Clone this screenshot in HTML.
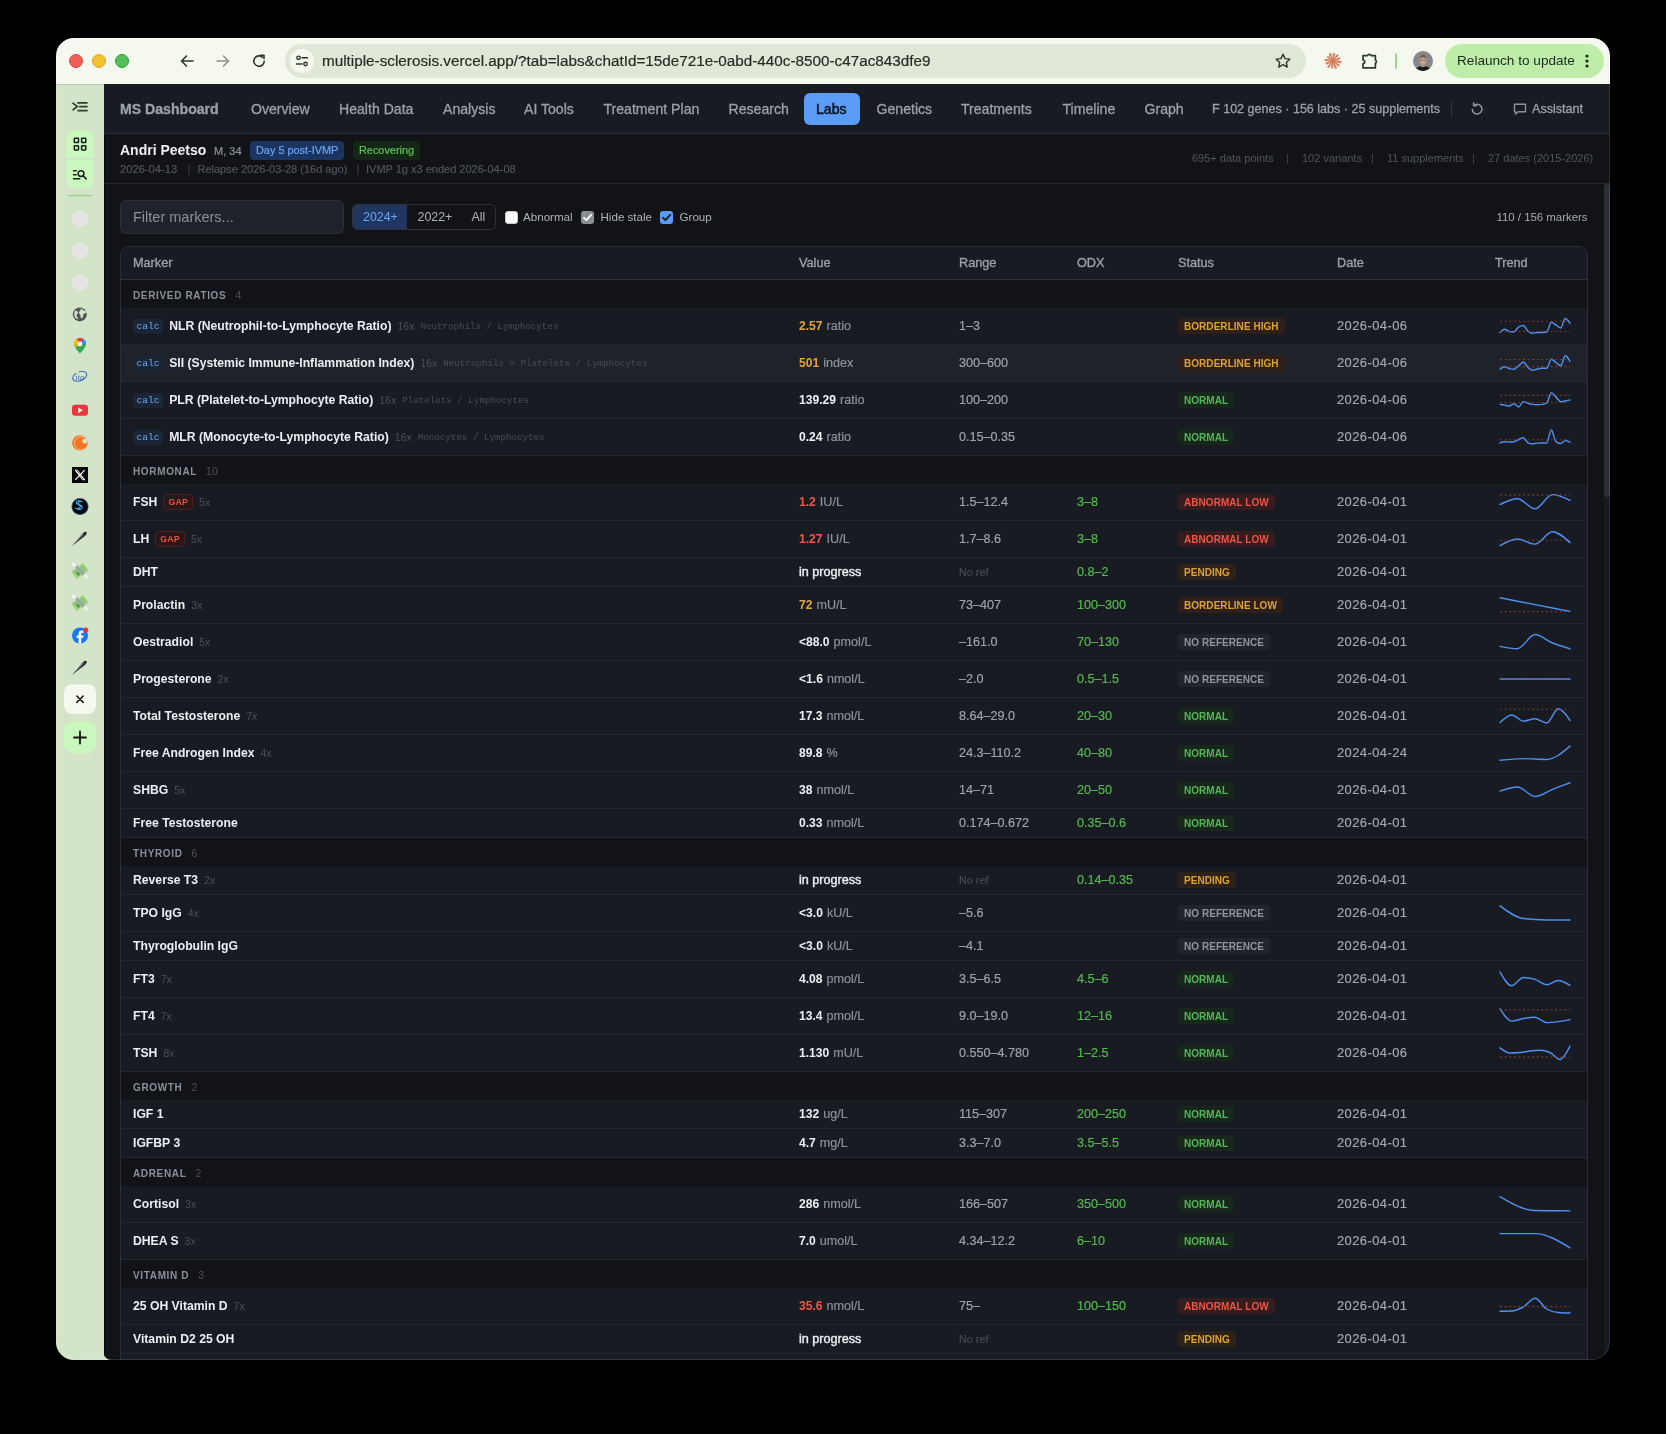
<!DOCTYPE html>
<html><head><meta charset="utf-8"><title>MS Dashboard - Labs</title>
<style>*{box-sizing:border-box;margin:0;padding:0}
html,body{width:1666px;height:1434px;overflow:hidden;background:#000;font-family:"Liberation Sans",sans-serif}
.win{position:absolute;left:56px;top:38px;width:1554px;height:1322px;border-radius:18px;overflow:hidden;background:#121317;will-change:transform}
.win::after{content:'';position:absolute;left:0;top:0;width:1554px;height:1322px;box-sizing:border-box;border:1px solid rgba(255,255,255,.12);border-radius:18px;pointer-events:none;z-index:50}
.gcorner{position:absolute;left:48px;top:1300px;width:22px;height:22px;background:#d3e4c9}
.abs{position:absolute;white-space:nowrap}
.chrome{position:absolute;left:0;top:0;width:1554px;height:46px;background:#f5f8ef}
.tl{position:absolute;top:16px;width:14px;height:14px;border-radius:50%}
.url{position:absolute;left:229px;top:6px;width:1021px;height:34px;border-radius:17px;background:#dfe7d6}
.urltxt{position:absolute;left:266px;top:14px;font-size:15.27px;line-height:18px;color:#262b24;letter-spacing:0}
.site{position:absolute;left:234px;top:11px;width:24px;height:24px;border-radius:50%;background:#f5f8ef}
.relaunch{position:absolute;left:1389px;top:6px;width:159px;height:34px;border-radius:17px;background:#bdeda9}
.side{position:absolute;left:0;top:46px;width:48px;height:1276px;background:#d3e4c9;box-shadow:inset 0 1px 0 #bfcbb6}
.main{position:absolute;left:48px;top:46px;width:1506px;height:1276px;background:#121317;border-bottom-left-radius:7px;overflow:hidden}
.mline{position:absolute;left:0;top:0;width:1px;height:1276px;background:#07080a}
.nav{position:absolute;left:0;top:0;width:1506px;height:50px;background:#181b22;border-bottom:1px solid #2a2e36}
.nv{position:absolute;top:0;font-size:14.1px;line-height:50px;color:#9ba1ab;white-space:nowrap;-webkit-text-stroke:.3px currentColor}
.hdr{position:absolute;left:0;top:50px;width:1506px;height:50px;border-bottom:1px solid #23262d}
.badge{position:absolute;top:7px;height:19px;border-radius:4px;font-size:10.9px;line-height:19px;padding:0 6px;white-space:nowrap;-webkit-text-stroke:.2px currentColor}
.tbl{position:absolute;left:16px;top:162px;width:1468px;border:1px solid #2a2e36;border-radius:9px;overflow:hidden;background:#181b22}
.th{position:absolute;left:0;top:0;width:1466px;height:33px;border-bottom:1px solid #2c3038;background:#181b22}
.th span{position:absolute;top:0;line-height:32px;font-size:12.7px;color:#9aa0a9;-webkit-text-stroke:.35px currentColor}
.grp{position:absolute;left:0;width:1466px;background:#121317}
.gn{position:absolute;left:12px;top:.5px;line-height:28px;font-size:10px;font-weight:700;letter-spacing:.65px;color:#8a9099}
.gc{font-size:10.5px;font-weight:400;letter-spacing:0;color:#4d525a;margin-left:9px}
.row{position:absolute;left:0;width:1466px;background:#181b22;border-bottom:1px solid #24272e;box-sizing:content-box}
.row.hov{background:#1f2229}
.c{position:absolute;top:0;height:100%;display:flex;align-items:center;white-space:nowrap}
.cm{left:12px}.cv{left:678px}.cr{left:838px}.co{left:956px}.cs{left:1057px}.cd{left:1216px}.ct{left:1369px}
.calc{display:inline-block;height:15px;line-height:16.5px;padding:0 3.6px;border-radius:3px;background:#1a2535;color:#6fa9f5;font-family:"Liberation Mono",monospace;font-size:9.6px;margin-right:6px}
.mn{font-size:12.2px;font-weight:700;color:#eceef1}
.gap{display:inline-block;height:16px;line-height:15.5px;padding:0 4px;border-radius:3px;background:#2a1719;border:1px solid #4a1f20;color:#e6533f;font-size:8.8px;font-weight:700;margin-left:6px;letter-spacing:.2px}
.cnt{font-size:10.5px;color:#4b5058;margin-left:6px}
.mono{font-family:"Liberation Mono",monospace;font-size:9.2px;color:#474c55;margin-left:6px}
.v{font-size:12.1px;font-weight:700}
.v.amber{color:#e1a43c}.v.red{color:#ef5848}.v.w{color:#eceef1}
.u{font-size:12.6px;color:#8c929b;margin-left:4px}
.cr{font-size:12.6px;color:#9ea3ab}
.cr.dim{font-size:10.8px;color:#474b53}
.co{font-size:12.6px;color:#55b94f}
.cd{font-size:12.9px;color:#a2a7af;letter-spacing:.45px;top:-1px}
.pill{display:inline-block;height:16px;line-height:17.4px;padding:0 6px;border-radius:4px;font-size:10px;font-weight:700;letter-spacing:.05px}
.pill.bh{background:#2f1f1b;color:#dca330}
.pill.nm{background:#17271c;color:#52b755}
.pill.al{background:#351c1e;color:#ec5644}
.pill.pd{background:#2d2219;color:#dca330}
.pill.nr{background:#21242b;color:#8f959d}
.spk{display:block}
.sl{fill:none;stroke:#4f8ff0;stroke-width:1.45;stroke-linecap:round;stroke-linejoin:round}
.rl{stroke:#9a4434;stroke-width:1.1;stroke-dasharray:2 2.6;opacity:.75}
.sb{position:absolute;left:1500px;top:100px;width:5px;height:1176px;background:#171a21}
.thumb{position:absolute;left:0;top:0;width:5.5px;height:313px;border-radius:3px;background:#2c2f36}

.sub{top:28px;font-size:11.2px;line-height:14px;color:#50555d}.sub.bar{color:#3a3e45}

.v.ip{font-size:12.6px;font-weight:400;-webkit-text-stroke:.4px currentColor}
.cd,.cr,.u,.co,.sub,.urltxt{-webkit-text-stroke:.18px currentColor}
</style></head>
<body>
<div class="win">
  <div class="chrome">
    <div class="tl" style="left:13px;background:#ee5f57;border:1px solid #e0443a"></div>
    <div class="tl" style="left:36px;background:#f3c02f;border:1px solid #dea622"></div>
    <div class="tl" style="left:59px;background:#55bd59;border:1px solid #2aa62f"></div>
    <!-- back -->
    <svg class="abs" style="left:123px;top:15px" width="16" height="16" viewBox="0 0 16 16"><path d="M14 8H2.5M7.5 3L2.5 8l5 5" fill="none" stroke="#2c3528" stroke-width="1.6" stroke-linecap="round" stroke-linejoin="round"/></svg>
    <svg class="abs" style="left:159px;top:15px" width="16" height="16" viewBox="0 0 16 16"><path d="M2 8h11.5M8.5 3l5 5-5 5" fill="none" stroke="#8c9488" stroke-width="1.6" stroke-linecap="round" stroke-linejoin="round"/></svg>
    <svg class="abs" style="left:195px;top:15px" width="16" height="16" viewBox="0 0 16 16"><path d="M13.2 8.2A5.2 5.2 0 1 1 11.6 4.3" fill="none" stroke="#2c3528" stroke-width="1.6" stroke-linecap="round"/><path d="M9.6 2.2h3.4v3.4" fill="none" stroke="#2c3528" stroke-width="1.6" stroke-linecap="round" stroke-linejoin="round"/></svg>
    <div class="url"></div>
    <div class="site"></div>
    <svg class="abs" style="left:238px;top:15px" width="16" height="16" viewBox="0 0 16 16"><circle cx="4.5" cy="4.8" r="1.7" fill="none" stroke="#2c3528" stroke-width="1.4"/><path d="M8 4.8h5.5M2.5 11h5.5" stroke="#2c3528" stroke-width="1.4" stroke-linecap="round"/><circle cx="11.5" cy="11" r="1.7" fill="none" stroke="#2c3528" stroke-width="1.4"/></svg>
    <div class="urltxt">multiple-sclerosis.vercel.app/?tab=labs&amp;chatId=15de721e-0abd-440c-8500-c47ac843dfe9</div>
    <svg class="abs" style="left:1218px;top:14px" width="18" height="18" viewBox="0 0 18 18"><path d="M9 2.2l2.05 4.4 4.75.55-3.5 3.25.95 4.7L9 12.7l-4.25 2.4.95-4.7L2.2 7.15l4.75-.55z" fill="none" stroke="#2c3528" stroke-width="1.4" stroke-linejoin="round"/></svg>
    <svg class="abs" style="left:1268px;top:14px" width="18" height="18" viewBox="0 0 18 18"><path d="M9.94,9.49 L17.00,10.98 L17.24,9.30 L10.04,8.79Z M9.57,9.89 L14.47,14.35 L15.51,13.01 L10.00,9.34Z M9.05,10.06 L11.21,16.74 L12.78,16.10 L9.70,9.80Z M8.51,9.94 L7.16,16.01 L8.84,16.25 L9.21,10.04Z M8.11,9.57 L3.22,15.02 L4.56,16.06 L8.66,10.00Z M7.94,9.05 L1.73,11.02 L2.36,12.60 L8.20,9.70Z M8.06,8.51 L1.10,7.03 L0.86,8.71 L7.96,9.21Z M8.43,8.11 L4.01,4.02 L2.96,5.36 L8.00,8.66Z M8.95,7.94 L6.72,1.08 L5.14,1.72 L8.30,8.20Z M9.49,8.06 L10.91,1.49 L9.23,1.26 L8.79,7.96Z M9.89,8.43 L14.53,3.30 L13.19,2.25 L9.34,8.00Z M10.06,8.95 L16.09,7.05 L15.45,5.48 L9.80,8.30Z" fill="#d97757" stroke="#d97757" stroke-width=".5" stroke-linejoin="round"/><circle cx="9" cy="9" r="2.2" fill="#d97757"/></svg>
    <svg class="abs" style="left:1305px;top:14px" width="18" height="18" viewBox="0 0 18 18"><path d="M2 3.6h4.6a1.9 1.9 0 0 1 3.6 0H14.4v4.3a1.9 1.9 0 0 1 0 3.4v4.6H2v-4.4a1.7 1.7 0 0 0 0-3.5z" fill="none" stroke="#2c3a2a" stroke-width="1.7" stroke-linejoin="round"/></svg>
    <div class="abs" style="left:1339px;top:15px;width:2px;height:16px;background:#9fd98d;border-radius:1px"></div>
    <svg class="abs" style="left:1357px;top:13px" width="20" height="20" viewBox="0 0 20 20"><defs><clipPath id="av"><circle cx="10" cy="10" r="10"/></clipPath></defs><g clip-path="url(#av)"><rect width="20" height="20" fill="#85888c"/><ellipse cx="10" cy="21.5" rx="9.5" ry="6.5" fill="#16181d"/><path d="M8.3 13h3.4v3H8.3z" fill="#b8927a"/><ellipse cx="10" cy="9.2" rx="3.3" ry="4.4" fill="#c9a48a"/><path d="M6.6 8c0-2.8 1.5-4.2 3.4-4.2s3.4 1.4 3.4 4.2c-.8-1.2-2-1.6-3.4-1.6s-2.6.4-3.4 1.6z" fill="#7a5a40"/><path d="M7.3 9.2h2.3M10.4 9.2h2.3" stroke="#3a3a3a" stroke-width=".6"/></g></svg>
    <div class="relaunch"></div>
    <div class="abs" style="left:1401px;top:14px;font-size:13.6px;line-height:18px;color:#1c2a18">Relaunch to update</div>
    <svg class="abs" style="left:1527px;top:14px" width="8" height="18" viewBox="0 0 8 18"><circle cx="4" cy="4" r="1.6" fill="#1c2a18"/><circle cx="4" cy="9" r="1.6" fill="#1c2a18"/><circle cx="4" cy="14" r="1.6" fill="#1c2a18"/></svg>
  </div>
  <div class="side">
    <svg width="48" height="1276" viewBox="56 84 48 1276" style="position:absolute;left:0;top:0">
<g fill="none" stroke="#2f3d2a" stroke-width="1.7" stroke-linecap="round" stroke-linejoin="round">
<path d="M73 103.2l4.2 3.3-4.2 3.3"/><path d="M78 102.8h9M79.5 106.6h7.5M78 110.6h9"/>
</g>
<path d="M74 130h12a8 8 0 0 1 8 8v20h-28v-20a8 8 0 0 1 8-8z" fill="#c9f7bd"/>
<path d="M66 160h28v20a8 8 0 0 1-8 8h-12a8 8 0 0 1-8-8z" fill="#c9f7bd"/>
<g fill="none" stroke="#17201a" stroke-width="1.5">
<rect x="74.3" y="138.3" width="4.2" height="4.2" rx=".6"/><rect x="81.6" y="138.3" width="4.2" height="4.2" rx=".6"/>
<rect x="74.3" y="145.7" width="4.2" height="4.2" rx=".6"/><rect x="81.6" y="145.7" width="4.2" height="4.2" rx=".6"/>
</g>
<g fill="none" stroke="#17201a" stroke-width="1.5" stroke-linecap="round">
<path d="M73.5 170.7h2.7M73.5 174.8h2.7M73.5 178.7h6.2"/><circle cx="81" cy="173.6" r="2.9"/><path d="M83.2 175.9l3 3"/>
</g>
<path d="M68 195.6h24" stroke="#93cf84" stroke-width="1.3"/>
<g fill="#e3e3e3" stroke="#f6f6f6" stroke-width=".8" stroke-dasharray="1.5 1.5">
<circle cx="79.8" cy="218.8" r="7.6"/><circle cx="79.8" cy="250.6" r="7.6"/><circle cx="79.8" cy="282.4" r="7.6"/>
</g>
<circle cx="79.8" cy="314.4" r="7" fill="#53575c"/>
<path d="M75 310.5c1.8.2 3 1 3 2.3s-1.5 1.2-1.5 2.8 1.8 1.4 1.2 3.6c-1.4-.3-3.2-1.8-3.5-4.2.2-1.8.4-3.4.8-4.5zM81 308.2c1.5.8 1.5 2 3 2.4.8.2 2.3.6 2.6 2-.8 1.2-2 .4-3 1.5-.9 1-.1 2.8-1.4 3.8-1 .5-2-.5-1.7-2 .4-1.5-1.8-1.5-1.4-3.6.3-1.4 1.7-1.4 1.9-4.1z" fill="#d3e4c9"/>
<g>
<path d="M80 353.5c-3-3.8-6-6.8-6-9.6a6 6 0 0 1 12 0c0 2.8-3 5.8-6 9.6z" fill="#34a853"/>
<path d="M74 343.9a6 6 0 0 1 3-5.2l3 5.2z" fill="#fbbc04"/>
<path d="M77 338.7a6 6 0 0 1 6 0l-3 5.2z" fill="#ea4335"/>
<path d="M83 338.7a6 6 0 0 1 3 5.2h-6z" fill="#4285f4"/>
<path d="M74 343.9h6l-4.3 4.2c-1-1.4-1.7-2.8-1.7-4.2z" fill="#fbbc04" opacity=".8"/>
<circle cx="80" cy="343.9" r="2.3" fill="#fff"/>
</g>
<g fill="none" stroke="#3b6fc0" stroke-width="1.1">
<path d="M76 373.5c-3 1.5-4 4.6-2.6 6.4 1.8 2.2 7.5 1.8 11.2-1.4 2.6-2.3 2.8-5.4.6-6.6-1.6-.9-4-.8-6.3 0"/>
</g>
<text x="75.3" y="379.6" font-family="Liberation Serif" font-style="italic" font-size="8.5" fill="#3b6fc0">ita</text>
<rect x="72" y="404.8" width="16" height="11" rx="3" fill="#e8363a"/>
<path d="M78.2 407.5v5.6l4.6-2.8z" fill="#fff"/>
<circle cx="79.9" cy="442.9" r="7.7" fill="#f47521"/>
<path d="M86.9 446.2A6.6 6.6 0 1 1 86.6 439.6" fill="none" stroke="#f9c9a8" stroke-width=".9"/>
<circle cx="81.2" cy="443.6" r="5.9" fill="#f47521"/>
<circle cx="84.8" cy="441.2" r="2.4" fill="#d3e4c9"/>
<rect x="72" y="467" width="16" height="16" fill="#050505"/>
<path d="M75.3 470.2l9.3 9.6M84.6 470.2l-9.3 9.6" stroke="#fff" stroke-width="1.2"/>
<path d="M75.3 470.2h2.3l7 9.6h-2.3z" fill="none" stroke="#fff" stroke-width=".8"/>
<circle cx="80" cy="506.5" r="8.3" fill="#03070b"/>
<circle cx="80" cy="506.5" r="8.1" fill="none" stroke="#3c6a86" stroke-width=".6"/>
<path d="M82.5 501.8c-2.5-.8-5 .3-4.2 2s4.5 1.3 4 3.6-3.7 2.5-5.2 1.5M80.5 501c-2.5-.8-5 .3-4.2 2s4.5 1.3 4 3.6-3.7 2.5-5.2 1.5" fill="none" stroke="#3bb6f5" stroke-width="1.1"/>
<g transform="translate(0 0)"><path d="M72.2 545.8L82.6 533.6C84.2 531.8 85.6 531.3 86.4 532.1 87.2 532.9 86.7 534.3 84.9 535.9z" fill="#25282b"/><path d="M75.5 541.8L83.4 534.2" stroke="#dfe3e6" stroke-width=".7" stroke-linecap="round"/></g>
<g transform="translate(80 571) rotate(-35)"><rect x="-7.5" y="-4.8" width="15" height="9.6" rx=".5" fill="#a3d48c"/><rect x="-5.5" y="-3.2" width="11" height="6.4" fill="#8fc776"/><text x="-4.6" y="2.8" font-size="5.5" font-weight="700" font-family="Liberation Sans" fill="#4c7c3a">$</text></g>
<path d="M75 565.5L85 575.5" stroke="#9aa3ad" stroke-width="2.6"/>
<ellipse cx="74" cy="564.8" rx="2.8" ry="1.7" transform="rotate(40 74 564.8)" fill="#eef0f3"/>
<ellipse cx="85.8" cy="576.4" rx="2.8" ry="1.7" transform="rotate(40 85.8 576.4)" fill="#eef0f3"/>
<g transform="translate(80 603) rotate(-35)"><rect x="-7.5" y="-4.8" width="15" height="9.6" rx=".5" fill="#a3d48c"/><rect x="-5.5" y="-3.2" width="11" height="6.4" fill="#8fc776"/><text x="-4.6" y="2.8" font-size="5.5" font-weight="700" font-family="Liberation Sans" fill="#4c7c3a">$</text></g>
<path d="M75 597.5L85 607.5" stroke="#9aa3ad" stroke-width="2.6"/>
<ellipse cx="74" cy="596.8" rx="2.8" ry="1.7" transform="rotate(40 74 596.8)" fill="#eef0f3"/>
<ellipse cx="85.8" cy="608.4" rx="2.8" ry="1.7" transform="rotate(40 85.8 608.4)" fill="#eef0f3"/>
<circle cx="80" cy="635.5" r="8" fill="#1877f2"/>
<path d="M81.2 643.5v-5.8h2l.3-2.3h-2.3v-1.5c0-.7.2-1.1 1.1-1.1h1.3v-2.1c-.3 0-1-.1-1.9-.1-1.9 0-3.1 1.1-3.1 3.2v1.6h-2v2.3h2v5.8z" fill="#fff"/>
<circle cx="85.7" cy="630.1" r="2.6" fill="#e53935"/>
<g transform="translate(0 129)"><path d="M72.2 545.8L82.6 533.6C84.2 531.8 85.6 531.3 86.4 532.1 87.2 532.9 86.7 534.3 84.9 535.9z" fill="#25282b"/><path d="M75.5 541.8L83.4 534.2" stroke="#dfe3e6" stroke-width=".7" stroke-linecap="round"/></g>
<rect x="64" y="684.5" width="32" height="29.5" rx="8" fill="#f4f8ed"/>
<path d="M76.8 696l6.4 6.4M83.2 696l-6.4 6.4" stroke="#1b1f1a" stroke-width="1.6" stroke-linecap="round"/>
<rect x="64" y="721.7" width="32" height="31.5" rx="8" fill="#c9f7bd"/>
<path d="M80 731.5v12M74 737.5h12" stroke="#121712" stroke-width="1.8" stroke-linecap="round"/>
</svg>

  </div>
  <div class="gcorner"></div>
  <div class="main"><div class="mline"></div>
    <div class="nav">
      <div class="nv" style="left:16px;font-weight:700;color:#9ba1ab">MS Dashboard</div>
      <div class="nv" style="left:147px">Overview</div>
      <div class="nv" style="left:235px">Health Data</div>
      <div class="nv" style="left:339px">Analysis</div>
      <div class="nv" style="left:420px">AI Tools</div>
      <div class="nv" style="left:499.5px">Treatment Plan</div>
      <div class="nv" style="left:624.5px">Research</div>
      <div class="abs" style="left:699.5px;top:9px;width:56.5px;height:32px;border-radius:6px;background:#5b9cf6"></div>
      <div class="nv" style="left:712px;color:#0b1220;-webkit-text-stroke:.5px #0b1220">Labs</div>
      <div class="nv" style="left:772.5px">Genetics</div>
      <div class="nv" style="left:857px">Treatments</div>
      <div class="nv" style="left:958.5px">Timeline</div>
      <div class="nv" style="left:1040.5px">Graph</div>
      <div class="nv" style="left:1108px;font-size:12.55px">F 102 genes · 156 labs · 25 supplements</div>
      <div class="abs" style="left:1347px;top:17px;width:1px;height:16px;background:#33373f"></div>
      <svg class="abs" style="left:1365px;top:17px" width="16" height="16" viewBox="0 0 16 16"><path d="M3.2 8.3A4.9 4.9 0 1 0 4.7 4.5" fill="none" stroke="#8d939c" stroke-width="1.5" stroke-linecap="round"/><path d="M4.6 1.8v2.9h2.9" fill="none" stroke="#8d939c" stroke-width="1.5" stroke-linecap="round" stroke-linejoin="round"/></svg>
      <svg class="abs" style="left:1408px;top:17px" width="16" height="16" viewBox="0 0 16 16"><path d="M2.5 3.2h11v7.6H6.2L3.5 13v-2.2h-1z" fill="none" stroke="#8d939c" stroke-width="1.4" stroke-linejoin="round"/></svg>
      <div class="nv" style="left:1428px;font-size:12.6px">Assistant</div>
    </div>
    <div class="hdr">
      <div class="abs" style="left:16px;top:7px;font-size:14px;font-weight:700;line-height:18px;color:#eef0f2">Andri Peetso</div>
      <div class="abs" style="left:110px;top:8px;font-size:11px;line-height:18px;color:#8c919a;-webkit-text-stroke:.2px currentColor">M, 34</div>
      <div class="badge" style="left:146px;background:#1c3560;color:#6aa5f4">Day 5 post-IVMP</div>
      <div class="badge" style="left:249px;background:#152616;color:#5cc35a">Recovering</div>
      <div class="abs sub" style="left:16px">2026-04-13</div><div class="abs sub bar" style="left:83.5px">|</div><div class="abs sub" style="left:93.5px;font-size:11px">Relapse 2026-03-28 (16d ago)</div><div class="abs sub bar" style="left:252.5px">|</div><div class="abs sub" style="left:262px;font-size:11px">IVMP 1g x3 ended 2026-04-08</div>
      <div class="abs" style="left:1088px;top:17px;font-size:11px;line-height:14px;color:#50555d">695+ data points</div>
      <div class="abs" style="left:1182px;top:17px;font-size:11px;line-height:14px;color:#3d4148">|</div>
      <div class="abs" style="left:1198px;top:17px;font-size:11px;line-height:14px;color:#50555d">102 variants</div>
      <div class="abs" style="left:1267px;top:17px;font-size:11px;line-height:14px;color:#3d4148">|</div>
      <div class="abs" style="left:1283px;top:17px;font-size:11px;line-height:14px;color:#50555d">11 supplements</div>
      <div class="abs" style="left:1368px;top:17px;font-size:11px;line-height:14px;color:#3d4148">|</div>
      <div class="abs" style="left:1384px;top:17px;font-size:11px;line-height:14px;color:#50555d">27 dates (2015-2026)</div>
    </div>
    <!-- filter row -->
    <div class="abs" style="left:16px;top:116px;width:224px;height:34px;border-radius:6px;background:#1f2229;border:1px solid #2c3038"></div>
    <div class="abs" style="left:29px;top:124px;font-size:14.5px;line-height:18px;color:#8a9099">Filter markers...</div>
    <div class="abs" style="left:248px;top:120px;width:144px;height:26px;border-radius:5px;border:1px solid #2c3038;overflow:hidden">
      <div class="abs" style="left:0;top:0;width:54px;height:24px;background:#1e3660"></div>
    </div>
    <div class="abs" style="left:259px;top:125px;font-size:12.4px;line-height:16px;color:#6aa6f4">2024+</div>
    <div class="abs" style="left:313.5px;top:125px;font-size:12.4px;line-height:16px;color:#aeb3ba">2022+</div>
    <div class="abs" style="left:367.5px;top:125px;font-size:12.4px;line-height:16px;color:#aeb3ba">All</div>
    <div class="abs" style="left:400.5px;top:127px;width:13px;height:13px;border-radius:3px;background:#fff;border:1px solid #c8c8c8"></div>
    <div class="abs" style="left:419px;top:125px;font-size:11.6px;line-height:16px;color:#aeb3ba">Abnormal</div>
    <svg class="abs" style="left:477px;top:127px" width="13" height="13" viewBox="0 0 13 13"><rect width="13" height="13" rx="3" fill="#8a8e95"/><path d="M3 6.8l2.4 2.4L10.2 3.8" fill="none" stroke="#fff" stroke-width="1.8" stroke-linecap="round" stroke-linejoin="round"/></svg>
    <div class="abs" style="left:496.5px;top:125px;font-size:11.6px;line-height:16px;color:#aeb3ba">Hide stale</div>
    <svg class="abs" style="left:556px;top:127px" width="13" height="13" viewBox="0 0 13 13"><rect width="13" height="13" rx="3" fill="#5a9bf6"/><path d="M3 6.8l2.4 2.4L10.2 3.8" fill="none" stroke="#1a1d22" stroke-width="1.8" stroke-linecap="round" stroke-linejoin="round"/></svg>
    <div class="abs" style="left:575.5px;top:125px;font-size:11.6px;line-height:16px;color:#aeb3ba">Group</div>
    <div class="abs" style="left:1392.5px;top:125px;font-size:11.4px;line-height:16px;color:#a6abb3">110 / 156 markers</div>
    <div class="tbl" style="height:1137px">
      <div class="th"><span style="left:12px">Marker</span><span style="left:678px">Value</span><span style="left:838px">Range</span><span style="left:956px">ODX</span><span style="left:1057px">Status</span><span style="left:1216px">Date</span><span style="left:1374px">Trend</span></div>
      <div class="grp" style="top:33px;height:28px"><span class="gn">DERIVED RATIOS<span class="gc">4</span></span></div><div class="row" style="top:61px;height:36px"><div class="c cm"><span class="calc">calc</span><span class="mn">NLR (Neutrophil-to-Lymphocyte Ratio)</span><span class="cnt">16x</span><span class="mono">Neutrophils / Lymphocytes</span></div><div class="c cv"><span class="v amber">2.57</span> <span class="u">ratio</span></div><div class="c cr">1–3</div><div class="c co"></div><div class="c cs"><span class="pill bh">BORDERLINE HIGH</span></div><div class="c cd">2026-04-06</div><div class="c ct"><svg class="spk" width="90" height="36" viewBox="0 0 90 36" overflow="visible"><path d="M10.0,24.6C11.6,22.9 13.1,21.2 14.7,21.2C16.2,21.2 17.8,23.2 19.3,23.5C20.9,23.7 22.4,23.8 24.0,23.8C25.6,23.8 27.1,19.7 28.7,18.8C30.2,17.9 31.8,17.4 33.3,17.4C34.9,17.4 36.4,21.9 38.0,23.2C39.6,24.6 41.1,25.3 42.7,25.3C44.2,25.3 45.8,24.4 47.3,24.4C48.9,24.4 50.4,24.4 52.0,24.4C53.6,24.4 55.1,24.3 56.7,24.0C58.2,23.8 59.8,14.3 61.3,14.3C62.9,14.3 64.4,16.2 66.0,17.1C67.6,18.0 69.1,19.9 70.7,19.9C72.2,19.9 73.8,10.4 75.3,10.4C76.9,10.4 78.4,12.9 80.0,15.4" class="sl"/><line x1="10" x2="80" y1="13.2" y2="13.2" class="rl"/><line x1="10" x2="80" y1="23.5" y2="23.5" class="rl"/></svg></div></div><div class="row hov" style="top:98px;height:36px"><div class="c cm"><span class="calc">calc</span><span class="mn">SII (Systemic Immune-Inflammation Index)</span><span class="cnt">16x</span><span class="mono">Neutrophils × Platelets / Lymphocytes</span></div><div class="c cv"><span class="v amber">501</span> <span class="u">index</span></div><div class="c cr">300–600</div><div class="c co"></div><div class="c cs"><span class="pill bh">BORDERLINE HIGH</span></div><div class="c cd">2026-04-06</div><div class="c ct"><svg class="spk" width="90" height="36" viewBox="0 0 90 36" overflow="visible"><path d="M10.0,24.0C11.6,22.9 13.1,21.7 14.7,21.7C16.2,21.7 17.8,23.3 19.3,23.6C20.9,24.0 22.4,24.2 24.0,24.2C25.6,24.2 27.1,22.1 28.7,20.8C30.2,19.6 31.8,16.9 33.3,16.9C34.9,16.9 36.4,21.1 38.0,22.5C39.6,23.9 41.1,25.3 42.7,25.3C44.2,25.3 45.8,24.3 47.3,24.0C48.9,23.6 50.4,23.3 52.0,23.3C53.6,23.3 55.1,23.3 56.7,23.3C58.2,23.3 59.8,14.2 61.3,14.2C62.9,14.2 64.4,16.4 66.0,17.5C67.6,18.6 69.1,20.8 70.7,20.8C72.2,20.8 73.8,10.8 75.3,10.8C76.9,10.8 78.4,13.6 80.0,16.4" class="sl"/><line x1="10" x2="80" y1="14.5" y2="14.5" class="rl"/><line x1="10" x2="80" y1="21.6" y2="21.6" class="rl"/></svg></div></div><div class="row" style="top:135px;height:36px"><div class="c cm"><span class="calc">calc</span><span class="mn">PLR (Platelet-to-Lymphocyte Ratio)</span><span class="cnt">16x</span><span class="mono">Platelets / Lymphocytes</span></div><div class="c cv"><span class="v w">139.29</span> <span class="u">ratio</span></div><div class="c cr">100–200</div><div class="c co"></div><div class="c cs"><span class="pill nm">NORMAL</span></div><div class="c cd">2026-04-06</div><div class="c ct"><svg class="spk" width="90" height="36" viewBox="0 0 90 36" overflow="visible"><path d="M10.0,22.4C11.6,22.6 13.1,22.9 14.7,23.1C16.2,23.4 17.8,24.0 19.3,24.0C20.9,24.0 22.4,21.8 24.0,21.8C25.6,21.8 27.1,24.9 28.7,24.9C30.2,24.9 31.8,19.6 33.3,19.6C34.9,19.6 36.4,20.8 38.0,21.2C39.6,21.7 41.1,22.1 42.7,22.4C44.2,22.6 45.8,22.7 47.3,22.7C48.9,22.7 50.4,22.6 52.0,22.4C53.6,22.1 55.1,22.0 56.7,21.2C58.2,20.5 59.8,10.6 61.3,10.6C62.9,10.6 64.4,13.6 66.0,15.1C67.6,16.6 69.1,19.6 70.7,19.6C72.2,19.6 73.8,19.3 75.3,19.0C76.9,18.7 78.4,18.3 80.0,17.9" class="sl"/><line x1="10" x2="80" y1="13.4" y2="13.4" class="rl"/><line x1="10" x2="80" y1="20.7" y2="20.7" class="rl"/></svg></div></div><div class="row" style="top:172px;height:36px"><div class="c cm"><span class="calc">calc</span><span class="mn">MLR (Monocyte-to-Lymphocyte Ratio)</span><span class="cnt">16x</span><span class="mono">Monocytes / Lymphocytes</span></div><div class="c cv"><span class="v w">0.24</span> <span class="u">ratio</span></div><div class="c cr">0.15–0.35</div><div class="c co"></div><div class="c cs"><span class="pill nm">NORMAL</span></div><div class="c cd">2026-04-06</div><div class="c ct"><svg class="spk" width="90" height="36" viewBox="0 0 90 36" overflow="visible"><path d="M10.0,23.9C11.6,23.3 13.1,22.7 14.7,22.7C16.2,22.7 17.8,23.0 19.3,23.0C20.9,23.0 22.4,22.9 24.0,22.7C25.6,22.6 27.1,21.2 28.7,20.5C30.2,19.9 31.8,18.8 33.3,18.8C34.9,18.8 36.4,23.1 38.0,23.9C39.6,24.6 41.1,25.0 42.7,25.0C44.2,25.0 45.8,24.2 47.3,24.1C48.9,23.9 50.4,23.9 52.0,23.9C53.6,23.9 55.1,23.9 56.7,23.9C58.2,23.9 59.8,11.0 61.3,11.0C62.9,11.0 64.4,21.6 66.0,22.7C67.6,23.9 69.1,24.4 70.7,24.4C72.2,24.4 73.8,21.6 75.3,21.6C76.9,21.6 78.4,22.5 80.0,23.3" class="sl"/><line x1="10" x2="80" y1="20.7" y2="20.7" class="rl"/></svg></div></div><div class="grp" style="top:209px;height:28px"><span class="gn">HORMONAL<span class="gc">10</span></span></div><div class="row" style="top:237px;height:36px"><div class="c cm"><span class="mn">FSH</span><span class="gap">GAP</span><span class="cnt">5x</span></div><div class="c cv"><span class="v red">1.2</span> <span class="u">IU/L</span></div><div class="c cr">1.5–12.4</div><div class="c co">3–8</div><div class="c cs"><span class="pill al">ABNORMAL LOW</span></div><div class="c cd">2026-04-01</div><div class="c ct"><svg class="spk" width="90" height="36" viewBox="0 0 90 36" overflow="visible"><path d="M10.0,20.5C15.8,17.6 21.7,14.7 27.5,14.7C33.3,14.7 39.2,24.8 45.0,24.8C50.8,24.8 56.7,10.6 62.5,10.6C68.3,10.6 74.2,13.5 80.0,16.4" class="sl"/><line x1="10" x2="80" y1="10.9" y2="10.9" class="rl"/></svg></div></div><div class="row" style="top:274px;height:36px"><div class="c cm"><span class="mn">LH</span><span class="gap">GAP</span><span class="cnt">5x</span></div><div class="c cv"><span class="v red">1.27</span> <span class="u">IU/L</span></div><div class="c cr">1.7–8.6</div><div class="c co">3–8</div><div class="c cs"><span class="pill al">ABNORMAL LOW</span></div><div class="c cd">2026-04-01</div><div class="c ct"><svg class="spk" width="90" height="36" viewBox="0 0 90 36" overflow="visible"><path d="M10.0,24.6C15.8,21.3 21.7,18.0 27.5,18.0C33.3,18.0 39.2,23.1 45.0,23.1C50.8,23.1 56.7,10.8 62.5,10.8C68.3,10.8 74.2,16.2 80.0,21.6" class="sl"/><line x1="10" x2="80" y1="19.3" y2="19.3" class="rl"/></svg></div></div><div class="row" style="top:311px;height:28px"><div class="c cm"><span class="mn">DHT</span></div><div class="c cv"><span class="v w ip">in progress</span></div><div class="c cr dim">No ref</div><div class="c co">0.8–2</div><div class="c cs"><span class="pill pd">PENDING</span></div><div class="c cd">2026-04-01</div></div><div class="row" style="top:340px;height:36px"><div class="c cm"><span class="mn">Prolactin</span><span class="cnt">3x</span></div><div class="c cv"><span class="v amber">72</span> <span class="u">mU/L</span></div><div class="c cr">73–407</div><div class="c co">100–300</div><div class="c cs"><span class="pill bh">BORDERLINE LOW</span></div><div class="c cd">2026-04-01</div><div class="c ct"><svg class="spk" width="90" height="36" viewBox="0 0 90 36" overflow="visible"><path d="M10.0,10.8C21.7,13.1 33.3,15.3 45.0,17.6C56.7,19.9 68.3,22.1 80.0,24.4" class="sl"/><line x1="10" x2="80" y1="24.6" y2="24.6" class="rl"/></svg></div></div><div class="row" style="top:377px;height:36px"><div class="c cm"><span class="mn">Oestradiol</span><span class="cnt">5x</span></div><div class="c cv"><span class="v w"><88.0</span> <span class="u">pmol/L</span></div><div class="c cr">–161.0</div><div class="c co">70–130</div><div class="c cs"><span class="pill nr">NO REFERENCE</span></div><div class="c cd">2026-04-01</div><div class="c ct"><svg class="spk" width="90" height="36" viewBox="0 0 90 36" overflow="visible"><path d="M10.0,22.4C15.8,23.6 21.7,24.7 27.5,24.7C33.3,24.7 39.2,10.6 45.0,10.6C50.8,10.6 56.7,16.6 62.5,19.0C68.3,21.4 74.2,23.0 80.0,24.7" class="sl"/></svg></div></div><div class="row" style="top:414px;height:36px"><div class="c cm"><span class="mn">Progesterone</span><span class="cnt">2x</span></div><div class="c cv"><span class="v w"><1.6</span> <span class="u">nmol/L</span></div><div class="c cr">–2.0</div><div class="c co">0.5–1.5</div><div class="c cs"><span class="pill nr">NO REFERENCE</span></div><div class="c cd">2026-04-01</div><div class="c ct"><svg class="spk" width="90" height="36" viewBox="0 0 90 36" overflow="visible"><path d="M10.0,17.9L80.0,17.9" class="sl"/><line x1="10" x2="80" y1="17.9" y2="17.9" class="rl"/></svg></div></div><div class="row" style="top:451px;height:36px"><div class="c cm"><span class="mn">Total Testosterone</span><span class="cnt">7x</span></div><div class="c cv"><span class="v w">17.3</span> <span class="u">nmol/L</span></div><div class="c cr">8.64–29.0</div><div class="c co">20–30</div><div class="c cs"><span class="pill nm">NORMAL</span></div><div class="c cd">2026-04-01</div><div class="c ct"><svg class="spk" width="90" height="36" viewBox="0 0 90 36" overflow="visible"><path d="M10.0,24.6C13.9,20.8 17.8,16.9 21.7,16.9C25.6,16.9 29.4,23.1 33.3,23.1C37.2,23.1 41.1,20.8 45.0,20.8C48.9,20.8 52.8,24.9 56.7,24.9C60.6,24.9 64.4,10.8 68.3,10.8C72.2,10.8 76.1,16.5 80.0,22.3" class="sl"/><line x1="10" x2="80" y1="11.3" y2="11.3" class="rl"/></svg></div></div><div class="row" style="top:488px;height:36px"><div class="c cm"><span class="mn">Free Androgen Index</span><span class="cnt">4x</span></div><div class="c cv"><span class="v w">89.8</span> <span class="u">%</span></div><div class="c cr">24.3–110.2</div><div class="c co">40–80</div><div class="c cs"><span class="pill nm">NORMAL</span></div><div class="c cd">2024-04-24</div><div class="c ct"><svg class="spk" width="90" height="36" viewBox="0 0 90 36" overflow="visible"><path d="M10.0,25.2C17.8,24.4 25.6,23.6 33.3,23.6C41.1,23.6 48.9,24.4 56.7,24.4C64.4,24.4 72.2,17.8 80.0,11.1" class="sl"/></svg></div></div><div class="row" style="top:525px;height:36px"><div class="c cm"><span class="mn">SHBG</span><span class="cnt">5x</span></div><div class="c cv"><span class="v w">38</span> <span class="u">nmol/L</span></div><div class="c cr">14–71</div><div class="c co">20–50</div><div class="c cs"><span class="pill nm">NORMAL</span></div><div class="c cd">2026-04-01</div><div class="c ct"><svg class="spk" width="90" height="36" viewBox="0 0 90 36" overflow="visible"><path d="M10.0,19.1C15.8,17.1 21.7,15.0 27.5,15.0C33.3,15.0 39.2,24.5 45.0,24.5C50.8,24.5 56.7,19.6 62.5,17.3C68.3,15.0 74.2,12.9 80.0,10.7" class="sl"/></svg></div></div><div class="row" style="top:562px;height:28px"><div class="c cm"><span class="mn">Free Testosterone</span></div><div class="c cv"><span class="v w">0.33</span> <span class="u">nmol/L</span></div><div class="c cr">0.174–0.672</div><div class="c co">0.35–0.6</div><div class="c cs"><span class="pill nm">NORMAL</span></div><div class="c cd">2026-04-01</div></div><div class="grp" style="top:591px;height:28px"><span class="gn">THYROID<span class="gc">6</span></span></div><div class="row" style="top:619px;height:28px"><div class="c cm"><span class="mn">Reverse T3</span><span class="cnt">2x</span></div><div class="c cv"><span class="v w ip">in progress</span></div><div class="c cr dim">No ref</div><div class="c co">0.14–0.35</div><div class="c cs"><span class="pill pd">PENDING</span></div><div class="c cd">2026-04-01</div></div><div class="row" style="top:648px;height:36px"><div class="c cm"><span class="mn">TPO IgG</span><span class="cnt">4x</span></div><div class="c cv"><span class="v w"><3.0</span> <span class="u">kU/L</span></div><div class="c cr">–5.6</div><div class="c co"></div><div class="c cs"><span class="pill nr">NO REFERENCE</span></div><div class="c cd">2026-04-01</div><div class="c ct"><svg class="spk" width="90" height="36" viewBox="0 0 90 36" overflow="visible"><path d="M10.0,10.8C17.8,16.7 25.6,22.6 33.3,23.5C41.1,24.4 48.9,24.9 56.7,24.9C64.4,24.9 72.2,24.9 80.0,24.9" class="sl"/></svg></div></div><div class="row" style="top:685px;height:28px"><div class="c cm"><span class="mn">Thyroglobulin IgG</span></div><div class="c cv"><span class="v w"><3.0</span> <span class="u">kU/L</span></div><div class="c cr">–4.1</div><div class="c co"></div><div class="c cs"><span class="pill nr">NO REFERENCE</span></div><div class="c cd">2026-04-01</div></div><div class="row" style="top:714px;height:36px"><div class="c cm"><span class="mn">FT3</span><span class="cnt">7x</span></div><div class="c cv"><span class="v w">4.08</span> <span class="u">pmol/L</span></div><div class="c cr">3.5–6.5</div><div class="c co">4.5–6</div><div class="c cs"><span class="pill nm">NORMAL</span></div><div class="c cd">2026-04-01</div><div class="c ct"><svg class="spk" width="90" height="36" viewBox="0 0 90 36" overflow="visible"><path d="M10.0,11.0C13.9,17.9 17.8,24.8 21.7,24.8C25.6,24.8 29.4,16.4 33.3,16.4C37.2,16.4 41.1,17.2 45.0,18.4C48.9,19.6 52.8,23.8 56.7,23.8C60.6,23.8 64.4,19.5 68.3,19.5C72.2,19.5 76.1,21.9 80.0,24.4" class="sl"/></svg></div></div><div class="row" style="top:751px;height:36px"><div class="c cm"><span class="mn">FT4</span><span class="cnt">7x</span></div><div class="c cv"><span class="v w">13.4</span> <span class="u">pmol/L</span></div><div class="c cr">9.0–19.0</div><div class="c co">12–16</div><div class="c cs"><span class="pill nm">NORMAL</span></div><div class="c cd">2026-04-01</div><div class="c ct"><svg class="spk" width="90" height="36" viewBox="0 0 90 36" overflow="visible"><path d="M10.0,10.8C13.9,16.9 17.8,23.1 21.7,23.1C25.6,23.1 29.4,21.1 33.3,20.5C37.2,19.9 41.1,19.3 45.0,19.3C48.9,19.3 52.8,24.6 56.7,24.6C60.6,24.6 64.4,24.1 68.3,23.6C72.2,23.1 76.1,22.4 80.0,21.6" class="sl"/><line x1="10" x2="80" y1="11.9" y2="11.9" class="rl"/></svg></div></div><div class="row" style="top:788px;height:36px"><div class="c cm"><span class="mn">TSH</span><span class="cnt">8x</span></div><div class="c cv"><span class="v w">1.130</span> <span class="u">mU/L</span></div><div class="c cr">0.550–4.780</div><div class="c co">1–2.5</div><div class="c cs"><span class="pill nm">NORMAL</span></div><div class="c cd">2026-04-06</div><div class="c ct"><svg class="spk" width="90" height="36" viewBox="0 0 90 36" overflow="visible"><path d="M10.0,12.9C13.3,15.5 16.7,18.0 20.0,18.0C23.3,18.0 26.7,17.8 30.0,17.5C33.3,17.2 36.7,16.4 40.0,16.0C43.3,15.6 46.7,15.2 50.0,15.2C53.3,15.2 56.7,16.0 60.0,17.5C63.3,19.0 66.7,24.4 70.0,24.4C73.3,24.4 76.7,17.8 80.0,11.1" class="sl"/><line x1="10" x2="80" y1="22.1" y2="22.1" class="rl"/></svg></div></div><div class="grp" style="top:825px;height:28px"><span class="gn">GROWTH<span class="gc">2</span></span></div><div class="row" style="top:853px;height:28px"><div class="c cm"><span class="mn">IGF 1</span></div><div class="c cv"><span class="v w">132</span> <span class="u">ug/L</span></div><div class="c cr">115–307</div><div class="c co">200–250</div><div class="c cs"><span class="pill nm">NORMAL</span></div><div class="c cd">2026-04-01</div></div><div class="row" style="top:882px;height:28px"><div class="c cm"><span class="mn">IGFBP 3</span></div><div class="c cv"><span class="v w">4.7</span> <span class="u">mg/L</span></div><div class="c cr">3.3–7.0</div><div class="c co">3.5–5.5</div><div class="c cs"><span class="pill nm">NORMAL</span></div><div class="c cd">2026-04-01</div></div><div class="grp" style="top:911px;height:28px"><span class="gn">ADRENAL<span class="gc">2</span></span></div><div class="row" style="top:939px;height:36px"><div class="c cm"><span class="mn">Cortisol</span><span class="cnt">3x</span></div><div class="c cv"><span class="v w">286</span> <span class="u">nmol/L</span></div><div class="c cr">166–507</div><div class="c co">350–500</div><div class="c cs"><span class="pill nm">NORMAL</span></div><div class="c cd">2026-04-01</div><div class="c ct"><svg class="spk" width="90" height="36" viewBox="0 0 90 36" overflow="visible"><path d="M10.0,10.6C21.7,17.4 33.3,24.2 45.0,24.5C56.7,24.8 68.3,24.8 80.0,24.9" class="sl"/></svg></div></div><div class="row" style="top:976px;height:36px"><div class="c cm"><span class="mn">DHEA S</span><span class="cnt">3x</span></div><div class="c cv"><span class="v w">7.0</span> <span class="u">umol/L</span></div><div class="c cr">4.34–12.2</div><div class="c co">6–10</div><div class="c cs"><span class="pill nm">NORMAL</span></div><div class="c cd">2026-04-01</div><div class="c ct"><svg class="spk" width="90" height="36" viewBox="0 0 90 36" overflow="visible"><path d="M10.0,10.6C21.7,10.6 33.3,10.6 45.0,10.6C56.7,10.6 68.3,17.7 80.0,24.8" class="sl"/></svg></div></div><div class="grp" style="top:1013px;height:28px"><span class="gn">VITAMIN D<span class="gc">3</span></span></div><div class="row" style="top:1041px;height:36px"><div class="c cm"><span class="mn">25 OH Vitamin D</span><span class="cnt">7x</span></div><div class="c cv"><span class="v red">35.6</span> <span class="u">nmol/L</span></div><div class="c cr">75–</div><div class="c co">100–150</div><div class="c cs"><span class="pill al">ABNORMAL LOW</span></div><div class="c cd">2026-04-01</div><div class="c ct"><svg class="spk" width="90" height="36" viewBox="0 0 90 36" overflow="visible"><path d="M10.0,23.2C13.9,23.2 17.8,23.1 21.7,23.0C25.6,22.9 29.4,21.1 33.3,19.0C37.2,16.9 41.1,10.3 45.0,10.3C48.9,10.3 52.8,18.7 56.7,21.0C60.6,23.3 64.4,24.2 68.3,24.5C72.2,24.8 76.1,24.9 80.0,25.0" class="sl"/><line x1="10" x2="80" y1="18.6" y2="18.6" class="rl"/></svg></div></div><div class="row" style="top:1078px;height:28px"><div class="c cm"><span class="mn">Vitamin D2 25 OH</span></div><div class="c cv"><span class="v w ip">in progress</span></div><div class="c cr dim">No ref</div><div class="c co"></div><div class="c cs"><span class="pill pd">PENDING</span></div><div class="c cd">2026-04-01</div></div><div class="row" style="top:1107px;height:28px"><div class="c cm"><span class="mn">Vitamin D3 25 OH</span></div><div class="c cv"><span class="v w">35.6</span> <span class="u">nmol/L</span></div><div class="c cr"></div><div class="c co"></div><div class="c cs"><span class="pill nm">NORMAL</span></div><div class="c cd">2026-04-01</div></div>
    </div>
    <div class="sb"><div class="thumb"></div></div>
  </div>
</div>
</body></html>
